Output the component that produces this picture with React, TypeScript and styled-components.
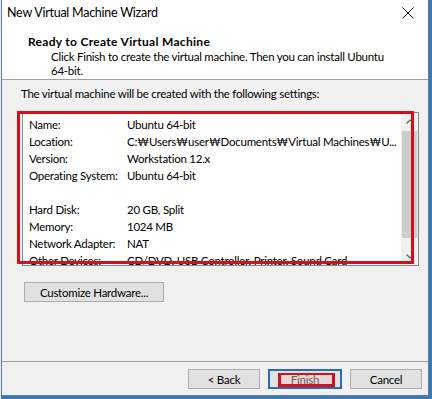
import React from "react";
import styled, { createGlobalStyle } from "styled-components";

const FONT = `Lato, "Liberation Sans", sans-serif`;

const Global = createGlobalStyle`
  html, body { margin: 0; padding: 0; }
  body {
    width: 432px;
    height: 399px;
    overflow: hidden;
    background: #3b78b4;
    font-family: ${FONT};
    font-size: 11.5px;
    letter-spacing: -0.25px;
    color: #000;
  }
  button { letter-spacing: -0.25px; }
`;

const Page = styled.div`
  width: 432px;
  height: 399px;
  display: flex;
  background: linear-gradient(to right, #e4edf5 0px, #e4edf5 1px, #3b78b4 1px);
`;

const Window = styled.div`
  margin-left: 1px;
  width: 428px;
  height: 396px;
  box-sizing: border-box;
  border: 1px solid #5b7d9f;
  border-top: none;
  display: flex;
  flex-direction: column;
  background: #f0f0f0;
`;

const TitleBar = styled.div`
  height: 30px;
  flex: none;
  background: #fff;
  display: flex;
  align-items: center;
  justify-content: space-between;
  padding: 0 0 5px 5px;
  box-sizing: border-box;
`;

const TitleText = styled.span`
  font-family: ${FONT};
  font-size: 12.5px;
  letter-spacing: -0.25px;
  color: #000;
`;

const CloseBtn = styled.div`
  width: 40px;
  height: 26px;
  display: flex;
  align-items: center;
  justify-content: center;
`;

const Header = styled.div`
  height: 50px;
  flex: none;
  box-sizing: border-box;
  background: #fff;
  border-bottom: 1px solid #a0a0a0;
  padding: 4px 0 0 26px;
`;

const HeaderTitle = styled.div`
  font-family: ${FONT};
  font-weight: 700;
  font-size: 12px;
  letter-spacing: 0.3px;
  line-height: 16px;
`;

const HeaderDesc = styled.div`
  font-family: ${FONT};
  line-height: 14px;
  padding-left: 23px;
  width: 345px;
`;

const Body = styled.div`
  flex: 1;
  display: flex;
  flex-direction: column;
  padding: 6px 0 0 19px;
`;

const Intro = styled.div`
  line-height: 16px;
`;

const ListWrap = styled.div`
  position: relative;
  margin-top: 10px;
  width: 397px;
  margin-left: 1px;
`;

const ListBox = styled.div`
  height: 154px;
  box-sizing: border-box;
  border: 1px solid #828790;
  background: #fff;
  display: flex;
`;

const Rows = styled.div`
  flex: 1;
  overflow: hidden;
  padding: 3px 0 0 6px;
`;

const Row = styled.div`
  display: flex;
  height: 17px;
  align-items: center;
  white-space: nowrap;
`;

const Label = styled.span`
  width: 98px;
  flex: none;
`;

const Value = styled.span``;

const ScrollBar = styled.div`
  width: 17px;
  flex: none;
  display: flex;
  flex-direction: column;
  background: #f0f0f0;
`;

const ScrollArrow = styled.div`
  height: 17px;
  display: flex;
  align-items: center;
  justify-content: center;
  flex: none;
`;

const ScrollTrack = styled.div`
  flex: 1;
  display: flex;
  flex-direction: column;
  padding: 1px 1px 10px 1px;
`;

const Thumb = styled.div`
  flex: 1;
  background: #cdcdcd;
`;

const RedMark = styled.div`
  position: absolute;
  box-sizing: border-box;
  border: 3px solid #d0121b;
  pointer-events: none;
`;

const ListMark = styled(RedMark)`
  left: -5px;
  top: -1px;
  width: 397px;
  height: 153px;
`;

const CustomizeBtn = styled.button`
  margin: 16px 0 0 3px;
  width: 140px;
  height: 20px;
  box-sizing: border-box;
  border: 1px solid #adadad;
  background: #e1e1e1;
  font-family: ${FONT};
  font-size: 11.5px;
  padding: 0;
  color: #000;
`;

const Footer = styled.div`
  height: 34px;
  flex: none;
  box-sizing: border-box;
  border-top: 1px solid #a0a0a0;
  display: flex;
  justify-content: flex-end;
  align-items: flex-start;
  gap: 8px;
  padding: 7px 6px 0 0;
`;

const Btn = styled.button<{ $focused?: boolean }>`
  position: relative;
  width: ${(p) => (p.$focused ? 74 : 72)}px;
  height: 20px;
  box-sizing: border-box;
  border: ${(p) => (p.$focused ? "2px solid #2b6cb0" : "1px solid #adadad")};
  background: #e1e1e1;
  font-family: ${FONT};
  font-size: 11.5px;
  padding: 0;
  color: #000;
`;

const FinishMark = styled(RedMark)`
  left: 8px;
  top: 2px;
  width: 57px;
  height: 14px;
  background: rgba(240, 200, 205, 0.45);
  border-width: 2px 3px 3px 3px;
`;

const rows: [string, string][] = [
  ["Name:", "Ubuntu 64-bit"],
  ["Location:", "C:₩Users₩user₩Documents₩Virtual Machines₩U..."],
  ["Version:", "Workstation 12.x"],
  ["Operating System:", "Ubuntu 64-bit"],
  ["", ""],
  ["Hard Disk:", "20 GB, Split"],
  ["Memory:", "1024 MB"],
  ["Network Adapter:", "NAT"],
  ["Other Devices:", "CD/DVD, USB Controller, Printer, Sound Card"],
];

export default function App() {
  return (
    <Page>
      <Global />
      <Window>
        <TitleBar>
          <TitleText>New Virtual Machine Wizard</TitleText>
          <CloseBtn>
            <svg width="12" height="12" viewBox="0 0 12 12">
              <path d="M0.5 0.5 L11.5 11.5 M11.5 0.5 L0.5 11.5" stroke="#111" strokeWidth="1" />
            </svg>
          </CloseBtn>
        </TitleBar>
        <Header>
          <HeaderTitle>Ready to Create Virtual Machine</HeaderTitle>
          <HeaderDesc>
            Click Finish to create the virtual machine. Then you can install Ubuntu 64-bit.
          </HeaderDesc>
        </Header>
        <Body>
          <Intro>The virtual machine will be created with the following settings:</Intro>
          <ListWrap>
            <ListBox>
              <Rows>
                {rows.map(([l, v], i) => (
                  <Row key={i}>
                    <Label>{l}</Label>
                    <Value>{v}</Value>
                  </Row>
                ))}
              </Rows>
              <ScrollBar>
                <ScrollArrow>
                  <svg width="8" height="5" viewBox="0 0 8 5">
                    <path d="M0.5 4.5 L4 1 L7.5 4.5" stroke="#606060" fill="none" strokeWidth="1.2" />
                  </svg>
                </ScrollArrow>
                <ScrollTrack>
                  <Thumb />
                </ScrollTrack>
                <ScrollArrow>
                  <svg width="8" height="5" viewBox="0 0 8 5">
                    <path d="M0.5 0.5 L4 4 L7.5 0.5" stroke="#606060" fill="none" strokeWidth="1.2" />
                  </svg>
                </ScrollArrow>
              </ScrollBar>
            </ListBox>
            <ListMark />
          </ListWrap>
          <CustomizeBtn>Customize Hardware...</CustomizeBtn>
        </Body>
        <Footer>
          <Btn>&lt; Back</Btn>
          <Btn $focused>
            Finish
            <FinishMark />
          </Btn>
          <Btn>Cancel</Btn>
        </Footer>
      </Window>
    </Page>
  );
}
